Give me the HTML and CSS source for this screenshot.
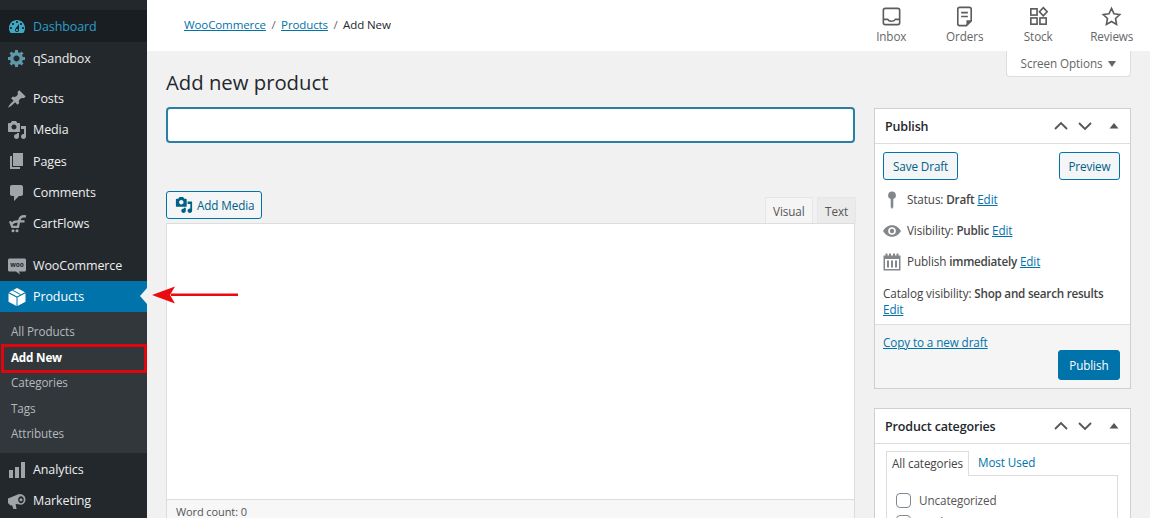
FILE: index.html
```html
<!DOCTYPE html>
<html lang="en">
<head>
<meta charset="utf-8">
<title>Add new product</title>
<link rel="stylesheet" href="styles.css">
</head>
<body>
<div class="page">
  <nav class="sidebar">
    <ul class="menu">
      <li class="item current-dash"><svg class="mi" viewBox="0 0 20 20"><path d="M3.76 16h12.48c1.1-1.37 1.76-3.11 1.76-5 0-4.42-3.58-8-8-8s-8 3.58-8 8c0 1.89.66 3.63 1.76 5zM10 4c.55 0 1 .45 1 1s-.45 1-1 1-1-.45-1-1 .45-1 1-1zM6 6c.55 0 1 .45 1 1s-.45 1-1 1-1-.45-1-1 .45-1 1-1zm8 0c.55 0 1 .45 1 1s-.45 1-1 1-1-.45-1-1 .45-1 1-1zm-5.37 5.55L12 7v6c0 1.1-.9 2-2 2s-2-.9-2-2c0-.57.24-1.08.63-1.45zM4 10c.55 0 1 .45 1 1s-.45 1-1 1-1-.45-1-1 .45-1 1-1zm12 0c.55 0 1 .45 1 1s-.45 1-1 1-1-.45-1-1 .45-1 1-1zm-5 3c0-.55-.45-1-1-1s-1 .45-1 1 .45 1 1 1 1-.45 1-1z"/></svg>Dashboard</li>
      <li class="item gear"><svg class="mi" viewBox="0 0 20 20"><path d="M18 12h-2.18c-.17.7-.44 1.35-.81 1.93l1.54 1.54-2.1 2.1-1.54-1.54c-.58.36-1.23.63-1.91.79V19H8v-2.18c-.68-.16-1.33-.43-1.91-.79l-1.54 1.54-2.12-2.12 1.54-1.54c-.36-.58-.63-1.23-.79-1.91H1V9.03h2.17c.16-.7.44-1.35.8-1.94L2.43 5.55l2.1-2.1 1.54 1.54c.58-.37 1.24-.64 1.93-.81V2h3v2.18c.68.16 1.33.43 1.91.79l1.54-1.54 2.12 2.12-1.54 1.54c.36.59.64 1.24.8 1.94H18V12zm-8.5 1.5c1.66 0 3-1.34 3-3s-1.34-3-3-3-3 1.34-3 3 1.34 3 3 3z"/></svg>qSandbox</li>
      <li class="sep"></li>
      <li class="item"><svg class="mi" viewBox="0 0 20 20"><path d="M10.44 3.02l1.82-1.82 6.36 6.35-1.83 1.82c-1.05-.68-2.48-.57-3.41.36l-.75.75c-.92.93-1.04 2.35-.35 3.41l-1.83 1.82-2.41-2.41-2.8 2.79c-.42.42-3.38 2.71-3.8 2.29s1.86-3.39 2.28-3.81l2.79-2.79L4.1 9.36l1.83-1.82c1.05.69 2.48.57 3.4-.36l.75-.75c.93-.92 1.05-2.35.36-3.41z"/></svg>Posts</li>
      <li class="item"><svg class="mi" viewBox="0 0 20 20"><path d="M13 11V4c0-.55-.45-1-1-1h-1.67L9 1H5L3.67 3H2c-.55 0-1 .45-1 1v7c0 .55.45 1 1 1h10c.55 0 1-.45 1-1zM7 4.5c1.38 0 2.5 1.12 2.5 2.5S8.38 9.5 7 9.5 4.5 8.38 4.5 7 5.62 4.5 7 4.5zM14 6h5v10.5c0 1.38-1.12 2.5-2.5 2.5S14 17.88 14 16.5s1.12-2.5 2.5-2.5c.17 0 .34.02.5.05V9h-3V6zm-4 8.05V13h2v3.5c0 1.38-1.12 2.5-2.5 2.5S7 17.88 7 16.5 8.12 14 9.5 14c.17 0 .34.02.5.05z"/></svg>Media</li>
      <li class="item"><svg class="mi" viewBox="0 0 20 20"><path d="M6 15V2h10v13H6zm-1 1h8v2H3V5h2v11z"/></svg>Pages</li>
      <li class="item"><svg class="mi" viewBox="0 0 20 20"><path d="M5 2h9c1.1 0 2 .9 2 2v7c0 1.1-.9 2-2 2h-2l-5 5v-5H5c-1.1 0-2-.9-2-2V4c0-1.1.9-2 2-2z"/></svg>Comments</li>
      <li class="item"><svg class="mi" viewBox="0 0 20 20"><path class="cf" d="M19 2.500c-3.500-.7-6 .5-6.700 3.800L11 12.800H5.300L3 7.200M9.500 7.300h8M11 7.600c-2.500-.3-4.800.5-6 2.300"/><circle cx="6" cy="16.800" r="1.500"/><circle cx="10" cy="16.800" r="1.500"/></svg>CartFlows</li>
      <li class="sep sep-wide"></li>
      <li class="item"><svg class="mi" viewBox="0 0 20 20"><path d="M2.500 2.500h15c.8 0 1.500.7 1.500 1.500v10c0 .8-.7 1.500-1.500 1.500H12l1 3-4-3H2.500c-.8 0-1.500-.7-1.500-1.500V4c0-.8.7-1.500 1.500-1.500z"/><text class="woo-mark" x="10" y="11" text-anchor="middle">woo</text></svg>WooCommerce</li>
      <li class="item active"><svg class="mi" viewBox="0 0 20 20"><path d="M10 1l8 4.300-8 4.200-8-4.200zM1.500 6.300l8 4.300V19l-8-4.300zM18.500 6.300v8.400l-8 4.300v-8.400z"/><path class="box-cut" d="M5.500 3.200l8 4.300"/></svg>Products</li>
      <li class="sub">
        <ul class="submenu">
          <li>All Products</li>
          <li class="sub-current">Add New</li>
          <li>Categories</li>
          <li>Tags</li>
          <li>Attributes</li>
        </ul>
      </li>
      <li class="item"><svg class="mi" viewBox="0 0 20 20"><path d="M18 18V2h-4v16h4zm-6 0V7H8v11h4zm-6 0v-8H2v8h4z"/></svg>Analytics</li>
      <li class="item"><svg class="mi" viewBox="0 0 20 20"><path d="M1 7.500l11-4.500 1 .3c2.800-.6 5.500 2 5.500 5.200 0 2.800-1.900 5-4.200 5.200L9.500 13l-.9.300 1 4.700H6.400l-1.300-3.800-1.600.4L1 12zM14 5.200c-1.500 0-2.800 1.500-2.800 3.500s1.300 3.500 2.800 3.500 2.800-1.500 2.800-3.500-1.300-3.500-2.800-3.500zm0 2a1.500 1.500 0 1 1 0 3 1.500 1.500 0 0 1 0-3z"/></svg>Marketing</li>
    </ul>
  </nav>

  <div class="main">
    <header class="topbar">
      <div class="crumbs"><a>WooCommerce</a><span class="slash">/</span><a>Products</a><span class="slash">/</span><span>Add New</span></div>
      <div class="activity">
        <div class="act"><svg viewBox="0 0 24 24"><rect x="3.500" y="3.500" width="17" height="17" rx="2"/><path d="M3.500 15h4.500c1 2 2.500 2 4 2s3-.5 4-2h4.500"/></svg><span>Inbox</span></div>
        <div class="act"><svg viewBox="0 0 24 24"><path d="M14 21.500H7c-1 0-2-.9-2-2V4.500c0-1 .9-2 2-2h10c1 0 2 .9 2 2v12z"/><path d="M8.500 8h7M8.500 12h7"/><path class="fill" d="M19 16h-5v5.500z"/></svg><span>Orders</span></div>
        <div class="act"><svg viewBox="0 0 24 24"><rect x="4" y="4" width="6.500" height="6.500"/><rect x="4" y="13.500" width="6.500" height="6.500"/><rect x="13.500" y="13.500" width="6.500" height="6.500"/><path d="M17 2.800l4 4.200-4 4.200-4-4.200z"/></svg><span>Stock</span></div>
        <div class="act"><svg viewBox="0 0 24 24"><path d="M12 3.500l2.600 5.600 6 .8-4.400 4.200 1.100 6.100-5.300-3-5.300 3 1.100-6.100-4.400-4.200 6-.8z"/></svg><span>Reviews</span></div>
      </div>
    </header>

    <div class="wrap">
      <div class="head-row">
        <h1>Add new product</h1>
        <button class="screen-options">Screen Options<i class="down"></i></button>
      </div>
      <div class="columns">
        <div class="left">
          <input class="title-input" type="text" aria-label="Product name">
          <div class="toolbar">
            <button class="btn media-btn"><svg viewBox="0 0 20 20"><path d="M13 11V4c0-.55-.45-1-1-1h-1.670L9 1H5L3.670 3H2c-.55 0-1 .45-1 1v7c0 .55.45 1 1 1h10c.55 0 1-.45 1-1zM7 4.500c1.380 0 2.500 1.120 2.500 2.500S8.380 9.500 7 9.500 4.500 8.380 4.500 7 5.620 4.500 7 4.500zM14 6h5v10.500c0 1.380-1.120 2.500-2.500 2.500S14 17.880 14 16.500s1.120-2.500 2.500-2.500c.17 0 .34.02.5.05V9h-3V6zm-4 8.050V13h2v3.500c0 1.380-1.120 2.500-2.500 2.500S7 17.880 7 16.500 8.120 14 9.500 14c.17 0 .34.02.5.05z"/></svg>Add Media</button>
            <div class="tabs"><span class="tab on">Visual</span><span class="tab">Text</span></div>
          </div>
          <div class="editor">
            <div class="editor-body"></div>
            <div class="status">Word count: 0</div>
          </div>
        </div>

        <aside class="right">
          <section class="box">
            <div class="box-head"><h2>Publish</h2><span class="ctrls"><svg viewBox="0 0 67 16"><path d="M1 11l6-6 6 6M25 5l6 6 6-6"/><path class="tri" d="M60 5l4.500 5.500h-9z"/></svg></span></div>
            <div class="box-body">
              <div class="btn-row"><button class="btn">Save Draft</button><button class="btn preview">Preview</button></div>
              <div class="meta"><svg viewBox="0 0 20 20"><path d="M10 1.500a3.800 3.800 0 0 1 1.300 7.400V17l-1.300 2-1.300-2V8.900A3.800 3.800 0 0 1 10 1.500z"/></svg><span>Status: <b>Draft</b> <a>Edit</a></span></div>
              <div class="meta"><svg viewBox="0 0 20 20"><path d="M19 10C16.200 5.700 13.300 4.300 10 4.300S3.800 5.700 1 10c2.800 4.300 5.700 5.700 9 5.700s6.200-1.400 9-5.700zM10 6.200a3.800 3.800 0 1 1 0 7.600 3.800 3.800 0 0 1 0-7.600zm0 1.600a2.200 2.200 0 1 0 0 4.400 2.200 2.200 0 0 0 0-4.400z" fill-rule="evenodd"/></svg><span>Visibility: <b>Public</b> <a>Edit</a></span></div>
              <div class="meta"><svg viewBox="0 0 20 20"><path fill-rule="evenodd" d="M3.500 1.500h2v2h1.500v-2h2v2h2v-2h2v2H14.500v-2h2v2H18.500V18.500h-17V3.500h2zM3 7v10h14V7zM5 8.500h2v7H5zm4 0h2v7H9zm4 0h2v7h-2z"/></svg><span>Publish <b>immediately</b> <a>Edit</a></span></div>
              <div class="catalog">Catalog visibility: <b>Shop and search results</b><br><a>Edit</a></div>
            </div>
            <div class="box-foot">
              <a>Copy to a new draft</a>
              <div class="foot-row"><button class="btn primary">Publish</button></div>
            </div>
          </section>

          <section class="box">
            <div class="box-head"><h2>Product categories</h2><span class="ctrls"><svg viewBox="0 0 67 16"><path d="M1 11l6-6 6 6M25 5l6 6 6-6"/><path class="tri" d="M60 5l4.500 5.500h-9z"/></svg></span></div>
            <div class="cat-body">
              <div class="cat-tabs"><span class="cat-tab on">All categories</span><a class="cat-tab">Most Used</a></div>
              <div class="cat-panel">
                <label class="check"><i></i>Uncategorized</label>
                <label class="check"><i></i>Books</label>
              </div>
            </div>
          </section>
        </aside>
      </div>
    </div>
  </div>
</div>

<div class="notch"></div>
<div class="callout-box"></div>
<svg class="arrow" viewBox="0 0 90 24"><path d="M20 10.500h67v2.600H20z"/><path d="M1 12L24 3.500l-5 8.500 5 8.500z"/></svg>
</body>
</html>
```
FILE: styles.css
```css
* { box-sizing: border-box; }
html, body { margin: 0; height: 518px; overflow: hidden; }
body { background: #f1f1f1; color: #444; font: 11.7px/1.4 "Open Sans", "Liberation Sans", sans-serif; letter-spacing: -.1px; }
ul { list-style: none; margin: 0; padding: 0; }
a { color: #0073aa; text-decoration: underline; }
button { font: inherit; letter-spacing: inherit; cursor: pointer; }

.page { display: flex; height: 518px; position: relative; }
.sidebar { width: 147px; flex: none; background: #23282d; padding-top: 10px; overflow: hidden; }
.item { height: 31.250px; display: flex; align-items: center; gap: 6px; padding: 1.500px 0 0 7px; color: #eee; font-size: 12.500px; }
.mi { width: 20px; height: 20px; flex: none; fill: #a0a5aa; }
.cf { fill: none; stroke: #a0a5aa; stroke-width: 2.300; }
.sep { height: 9.500px; }
.sep-wide { height: 10.500px; }
.current-dash { background: #191e23; color: #2e9fc6; height: 32px; }
.current-dash .mi { fill: #3fa9c5; }
.gear { height: 31px; }
.gear .mi { fill: #5f96a8; }
.active { background: #0073aa; color: #fff; }
.active .mi { fill: #fff; }
.box-cut { fill: none; stroke: #0073aa; stroke-width: 1; }
.woo-mark { font-size: 6.500px; fill: #23282d; font-weight: 700; letter-spacing: 0; }
.sub { background: #32373c; padding: 7.500px 0 6px; height: 141.500px; }
.submenu li { height: 25.500px; line-height: 25.500px; padding-left: 11px; font-size: 11.700px; color: #b4b9be; }
.submenu .sub-current { color: #fff; font-weight: 700; letter-spacing: -.2px; }

.main { flex: 1; min-width: 0; display: flex; flex-direction: column; }
.topbar { height: 51px; flex: none; background: #fff; display: flex; justify-content: space-between; padding: 0 0 0 37px; }
.crumbs { padding-top: 17px; font-size: 11.500px; color: #23282d; }
.slash { margin: 0 5.500px; color: #666; }
.activity { display: flex; padding-right: 1.500px; }
.act { width: 73.500px; display: flex; flex-direction: column; align-items: center; color: #666; font-size: 11.700px; line-height: 14px; padding-top: 5px; }
.act svg { width: 23px; height: 23px; margin-bottom: 1px; fill: none; stroke: #5c5c5c; stroke-width: 1.700; }
.act .fill { fill: #5c5c5c; stroke: none; }

.wrap { padding: 0 19px; }
.head-row { display: flex; justify-content: space-between; align-items: flex-start; height: 56px; }
h1 { margin: 17px 0 0; font-size: 20.300px; line-height: 28px; font-weight: 400; color: #23282d; letter-spacing: 0; }
.screen-options { height: 26px; width: 125px; background: #fff; border: 1px solid #ddd; border-top: 0; border-radius: 0 0 4px 4px; color: #666; font-size: 11.700px; display: flex; align-items: center; justify-content: center; gap: 6px; padding: 0; }
.down { border: 4.500px solid transparent; border-top: 6px solid #666; border-bottom: 0; }

.columns { display: flex; gap: 18px; align-items: flex-start; }
.left { width: 690px; flex: none; }
.right { width: 257px; flex: none; margin-top: 1px; }
.title-input { display: block; width: 689px; height: 36px; background: #fff; border: 2px solid #2a7fa5; border-radius: 4px; outline: 0; }
.toolbar { display: flex; justify-content: space-between; align-items: flex-end; margin-top: 48px; width: 690px; }
.btn { height: 28px; border: 1px solid #0073aa; border-radius: 3px; background: #f3f5f6; color: #016087; padding: 0 9px; font-size: 11.700px; display: inline-flex; align-items: center; white-space: nowrap; }
.preview { padding: 0 8.500px; }
.media-btn { gap: 4px; padding: 0 8px; width: 96px; margin-bottom: 4px; }
.media-btn svg { width: 18px; height: 18px; fill: #016087; flex: none; }
.tabs { display: flex; gap: 4px; }
.tab { height: 26px; line-height: 26px; padding: 0 7px; background: #ebebeb; color: #555; font-size: 11.700px; border: 1px solid #e6e6e6; border-bottom: 0; }
.tab.on { background: #f5f5f5; width: 48px; }
.editor { width: 689px; border: 1px solid #ddd; height: 296px; display: flex; flex-direction: column; background: #fff; }
.editor-body { flex: 1; }
.status { height: 19px; flex: none; background: #f7f7f7; border-top: 1px solid #ddd; padding-left: 9px; font-size: 11px; line-height: 23px; color: #555; }

.box { background: #fff; border: 1px solid #ccd0d4; margin-bottom: 19px; }
.box-head { height: 35px; display: flex; justify-content: space-between; align-items: center; padding: 0 9px 0 10px; border-bottom: 1px solid #ddd; }
h2 { margin: 1px 0 0; font-size: 12.500px; font-weight: 600; color: #23282d; letter-spacing: -.15px; }
.ctrls svg { width: 67px; height: 16px; display: block; fill: none; stroke: #555; stroke-width: 1.800; }
.ctrls .tri { fill: #555; stroke: none; }
.box-body { padding: 8px 10px 7px 8px; }
.btn-row { display: flex; justify-content: space-between; align-items: flex-start; }
.meta { display: flex; align-items: center; gap: 5px; height: 31px; padding-top: 2px; }
.btn-row + .meta { margin-top: 3px; }
.meta svg { width: 20px; height: 20px; flex: none; margin-left: -1px; fill: #82878c; }
.catalog { line-height: 16px; margin-top: 9px; }
b { font-weight: 600; letter-spacing: -.25px; }
.box-foot { background: #f5f5f5; border-top: 1px solid #ddd; padding: 9px 10px 9px 8px; height: 64px; }
.foot-row { display: flex; justify-content: flex-end; margin-top: 0; }
.primary { background: #0073aa; color: #fff; border-color: #0073aa; height: 30px; padding: 0 10.500px; }
.cat-body { padding: 7px 12px 0 11px; }
.cat-tabs { display: flex; height: 25px; }
.cat-tab { height: 25px; line-height: 23px; padding: 0 5px; font-size: 11.700px; text-decoration: none; color: #0073aa; margin-left: 3px; }
.cat-tab.on { color: #444; background: #fff; border: 1px solid #ddd; border-bottom: 0; margin: 0 1px 0 0; position: relative; z-index: 1; }
.cat-panel { border: 1px solid #ddd; margin-top: -1px; padding: 13px 9px; }
.check { display: flex; align-items: center; gap: 8px; height: 22px; font-size: 11.700px; color: #555; }
.check i { width: 15px; height: 15px; border: 1px solid #7e8993; border-radius: 4px; background: #fff; }

.notch { position: absolute; left: 140px; top: 288px; border: 8px solid transparent; border-right: 7px solid #f1f1f1; border-left: 0; }
.callout-box { position: absolute; left: 1px; top: 344px; width: 146px; height: 29px; border: 3px solid #e0060d; }
.arrow { position: absolute; left: 151px; top: 283px; width: 90px; height: 24px; fill: #ea0a0f; }
```
